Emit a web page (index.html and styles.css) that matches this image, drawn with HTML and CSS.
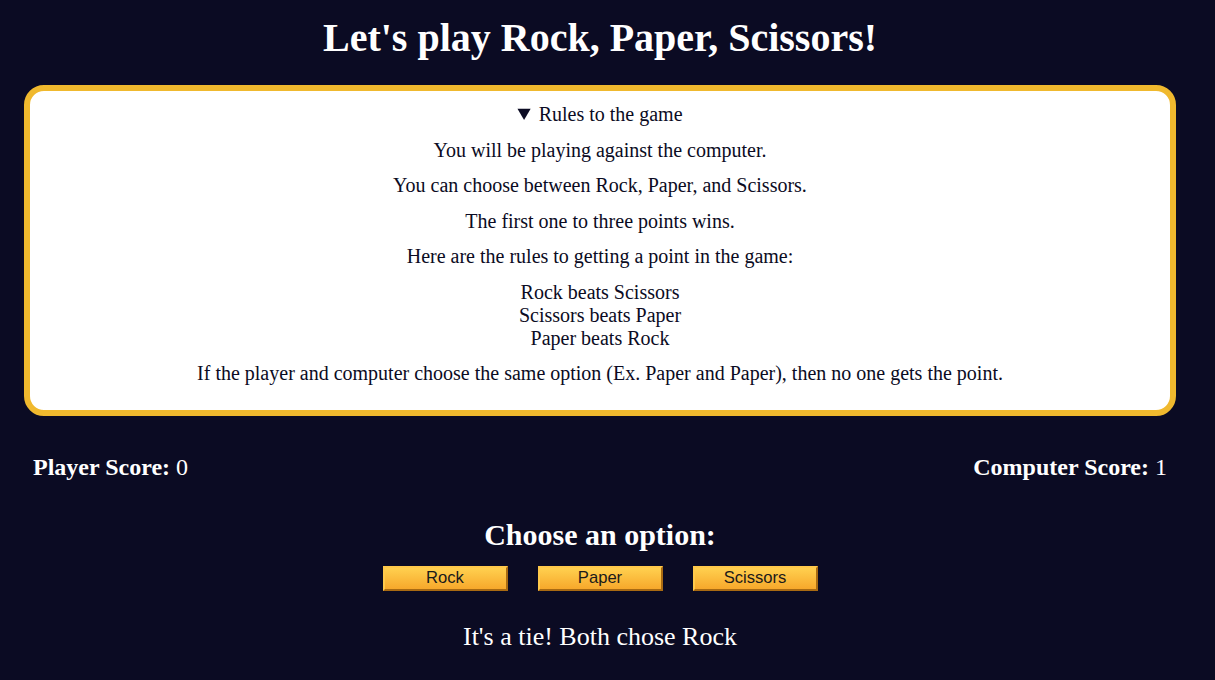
FILE: index.html
```html
<!DOCTYPE html>
<html lang="en">
<head>
<meta charset="utf-8">
<title>Rock Paper Scissors</title>
<link rel="stylesheet" href="styles.css">
</head>
<body>
<h1 class="title">Let's play Rock, Paper, Scissors!</h1>
<details class="rules" open>
  <summary class="rules-summary">Rules to the game</summary>
  <p>You will be playing against the computer.</p>
  <p>You can choose between Rock, Paper, and Scissors.</p>
  <p>The first one to three points wins.</p>
  <p>Here are the rules to getting a point in the game:</p>
  <p>Rock beats Scissors<br>Scissors beats Paper<br>Paper beats Rock</p>
  <p>If the player and computer choose the same option (Ex. Paper and Paper), then no one gets the point.</p>
</details>
<div class="scores">
  <div class="score"><strong>Player Score:</strong> 0</div>
  <div class="score"><strong>Computer Score:</strong> 1</div>
</div>
<h2 class="choose">Choose an option:</h2>
<div class="options">
  <button class="opt">Rock</button>
  <button class="opt">Paper</button>
  <button class="opt">Scissors</button>
</div>
<p class="result">It's a tie! Both chose Rock</p>
</body>
</html>
```
FILE: styles.css
```css
html, body {
  background: #0b0b23;
}
body {
  margin: 0;
  padding: 0 39px 0 24px;
  color: #ffffff;
  font-family: "Liberation Serif", "Times New Roman", serif;
  text-align: center;
}
.title {
  font-size: 40px;
  line-height: 46px;
  margin: 15px 0 24px;
}
.rules {
  background: #ffffff;
  color: #0b0b23;
  border: 6px solid #f0b92e;
  border-radius: 20px;
  padding: 12px 20px 12px;
  font-size: 20px;
  line-height: 23px;
}
.rules-summary {
  cursor: pointer;
}
.rules p {
  margin: 12.5px 0;
}
.scores {
  display: flex;
  justify-content: space-between;
  padding: 0 9px;
  margin-top: 37px;
  font-size: 24px;
  line-height: 28px;
}
.choose {
  font-size: 30px;
  line-height: 34px;
  margin: 37px 0 14px;
}
.options {
  display: flex;
  justify-content: center;
  gap: 30px;
}
.opt {
  width: 125px;
  height: 25px;
  font-family: "Liberation Sans", Arial, sans-serif;
  font-size: 16.6px;
  color: #1a1a1a;
  background: linear-gradient(#ffd04f, #f7a82b);
  border: 2px solid;
  border-color: #ffc94a #a86a12 #a86a12 #ffc94a;
  padding: 0;
}
.result {
  font-size: 26px;
  line-height: 30px;
  margin: 31px 0 0;
}
```
